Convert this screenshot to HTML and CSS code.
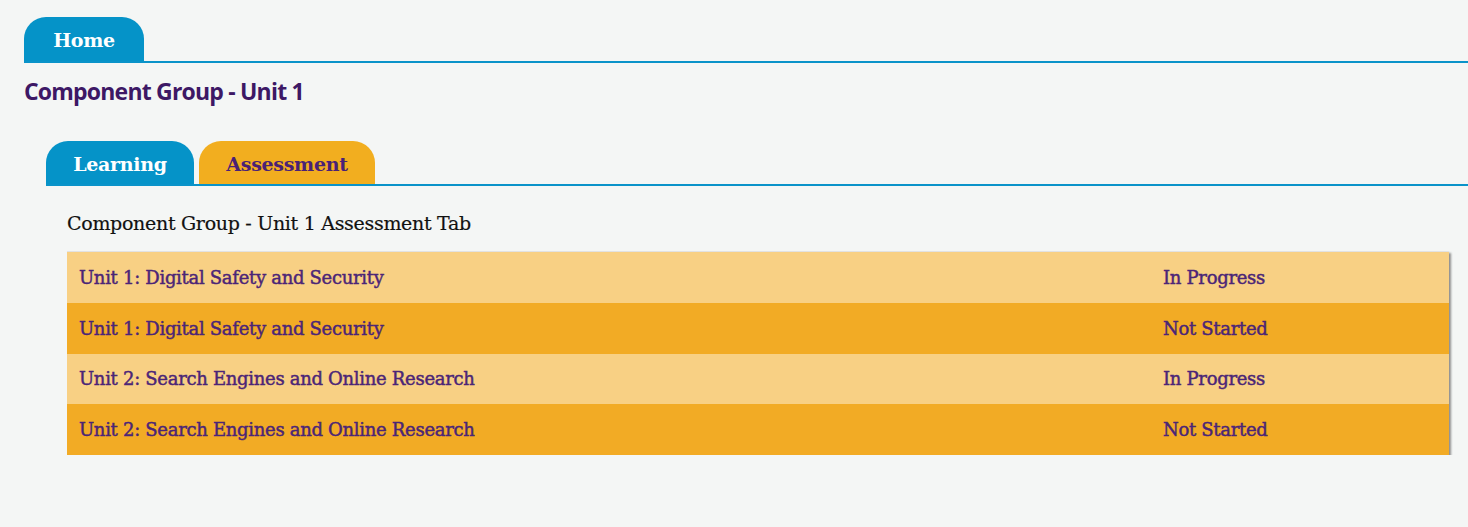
FILE: index.html
```html
<!DOCTYPE html>
<html lang="en">
<head>
<meta charset="utf-8">
<title>Component Group - Unit 1</title>
<link rel="stylesheet" href="styles.css">
</head>
<body>
<div class="page">
  <nav class="main-tabs">
    <a class="tab tab-home">Home</a>
  </nav>
  <h1 class="title">Component Group - Unit 1</h1>
  <section class="sub">
    <nav class="sub-tabs">
      <a class="tab tab-learning">Learning</a>
      <a class="tab tab-assessment">Assessment</a>
    </nav>
    <div class="panel">
      <p class="panel-title">Component Group - Unit 1 Assessment Tab</p>
      <div class="list">
        <div class="row light"><span class="name">Unit 1: Digital Safety and Security</span><span class="status">In Progress</span></div>
        <div class="row dark"><span class="name">Unit 1: Digital Safety and Security</span><span class="status">Not Started</span></div>
        <div class="row light"><span class="name">Unit 2: Search Engines and Online Research</span><span class="status">In Progress</span></div>
        <div class="row dark"><span class="name">Unit 2: Search Engines and Online Research</span><span class="status">Not Started</span></div>
      </div>
    </div>
  </section>
</div>
</body>
</html>
```
FILE: styles.css
```css
html, body {
  margin: 0;
  padding: 0;
  background: #f4f6f5;
}
body {
  font-family: "DejaVu Serif", "Liberation Serif", serif;
}
.page {
  padding: 17px 0 0 24px;
}
.main-tabs {
  display: flex;
  border-bottom: 2px solid #0a93c9;
  height: 44px;
}
.tab {
  display: flex;
  align-items: center;
  justify-content: center;
  height: 44px;
  border-radius: 22px 22px 0 0;
  font-weight: bold;
  font-size: 19px;
  letter-spacing: -0.3px;
  box-sizing: border-box;
  padding-top: 2px;
}
.tab-home {
  width: 120px;
  background: #0593c8;
  color: #fff;
}
.title {
  margin: 0;
  padding-top: 14px;
  height: 39px;
  font-family: "Open Sans", "Roboto", sans-serif;
  font-weight: 700;
  font-size: 23px;
  letter-spacing: -0.8px;
  color: #3d1865;
  line-height: 28px;
}
.sub {
  padding: 25px 0 0 22px;
}
.sub-tabs {
  display: flex;
  gap: 5px;
  height: 43px;
  border-bottom: 2px solid #0a93c9;
}
.sub-tabs .tab {
  height: 43px;
}
.tab-learning {
  width: 148px;
  background: #0593c8;
  color: #fff;
}
.tab-assessment {
  width: 176px;
  background: #f2ae1f;
  color: #4a2176;
}
.panel {
  padding: 22px 19px 0 21px;
}
.panel-title {
  margin: 0;
  font-size: 19px;
  letter-spacing: -0.3px;
  color: #111;
  line-height: 30px;
  height: 43px;
  -webkit-text-stroke: 0.2px #111;
}
.list {
  box-shadow: 2px 2px 2px #8e8e8e;
  border-top: 1px solid #e2e2e2;
}
.row {
  display: flex;
  align-items: center;
  height: 50.75px;
  padding: 0 0 0 12px;
  font-size: 18px;
  letter-spacing: -0.3px;
  color: #4b2577;
  -webkit-text-stroke: 0.45px #4b2577;
}
.row.light { background: #f8d084; }
.row.dark { background: #f2ab25; }
.name { flex: 1; }
.status { width: 286px; }
```
